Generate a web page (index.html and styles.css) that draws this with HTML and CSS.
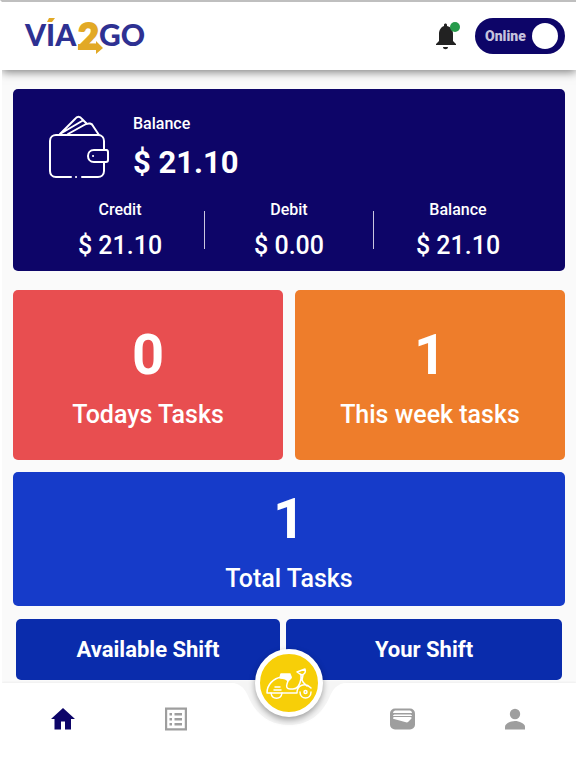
FILE: index.html
```html
<!DOCTYPE html>
<html lang="en">
<head>
    <meta charset="utf-8">
    <meta name="viewport" content="width=device-width, initial-scale=1">
    <title>VÍA2GO</title>
    <link rel="stylesheet" href="styles.css">
</head>
<body>
    <header class="topbar">
        <a href="#" class="logo">
            <svg width="130" height="56" viewBox="0 0 130 56">
                <text class="logo-blue" x="1" y="38">VÍA</text>
                <path fill="#fff" d="M20 7h14v8H20z"/>
                <path class="logo-gold" d="M25 10h6l-3 4h-5z"/>
                <text class="logo-gold logo-two" x="54" y="41">2</text>
                <path class="logo-gold" d="M54 36h18v-3l7 7-7 6v-4H54z"/>
                <text class="logo-blue" x="75" y="38">GO</text>
            </svg>
        </a>
        <div class="topbar-right">
            <button type="button" class="bell" aria-label="Notifications">
                <svg width="28" height="32" viewBox="0 0 28 32">
                    <path fill="#222" d="M1 25v-1l3-3v-7c0-4 2-7 5-8V5c0-2 3-2 3 0v1c4 1 6 4 6 8v7l3 3v1zM8 27h5c0 3-5 3-5 0z"/>
                    <circle cx="20" cy="7" r="5" fill="#269b4b"/>
                </svg>
            </button>
            <label class="switch">
                <input type="checkbox" checked>
                <span>Online</span>
                <i class="knob"></i>
            </label>
        </div>
    </header>

    <main class="content">
        <section class="balance">
            <div class="balance-top">
                <svg class="wallet" width="62" height="66" viewBox="0 0 62 66" fill="none" stroke="#fff" stroke-width="2" stroke-linecap="round" stroke-linejoin="round">
                    <path d="M24 64H9c-4 0-6-3-6-6V28c0-4 3-6 6-6h42c4 0 6 3 6 6v9M57 49v9c0 4-3 6-6 6H35M29 64h.1"/>
                    <path d="M60 37H47c-8 0-8 12 0 12h12c2 0 2-1 2-2V39c0-1 0-2-2-2M46 43h.1"/>
                    <path d="M13 21L28 6c2-3 5-3 7 0l4 4M21 21l18-10c3-1 6-1 7 2l6 9M13 21l22-13"/>
                </svg>
                <div>
                    <p class="label">Balance</p>
                    <p class="amount-big">$ 21.10</p>
                </div>
            </div>
            <div class="balance-stats">
                <div class="stat">
                    <p class="label">Credit</p>
                    <p class="amount">$ 21.10</p>
                </div>
                <span class="divider"></span>
                <div class="stat">
                    <p class="label">Debit</p>
                    <p class="amount">$ 0.00</p>
                </div>
                <span class="divider"></span>
                <div class="stat">
                    <p class="label">Balance</p>
                    <p class="amount">$ 21.10</p>
                </div>
            </div>
        </section>

        <section class="tasks">
            <a href="#" class="task red">
                <strong>0</strong>
                <span>Todays Tasks</span>
            </a>
            <a href="#" class="task orange">
                <strong>1</strong>
                <span>This week tasks</span>
            </a>
            <a href="#" class="task blue">
                <strong>1</strong>
                <span>Total Tasks</span>
            </a>
        </section>

        <section class="shifts">
            <button type="button" class="shift">Available Shift</button>
            <button type="button" class="shift">Your Shift</button>
        </section>
    </main>

    <nav class="bottom">
        <a href="#" class="active" aria-label="Home">
            <svg width="24" height="24" viewBox="0 0 24 24"><path d="M10 22.500v-8h4v8h6V12h4L12 1 0 12h3.500v10.500z"/></svg>
        </a>
        <a href="#" aria-label="Tasks">
            <svg width="24" height="24" viewBox="0 0 24 24"><path fill-rule="evenodd" d="M1 .5h22v23H1zM3.200 2.700v18.600h17.600v-18.600zM5.500 6H8v2.500H5.500zM10.500 6H18v2.500h-7.500zM5.500 11H8v2.500H5.500zM10.500 11H18v2.500h-7.500zM5.500 16H8v2.500H5.500zM10.500 16H18v2.500h-7.500z"/></svg>
        </a>
        <div class="middle">
            <svg class="notch" width="128" height="46" viewBox="0 0 128 46">
                <path d="M0 0c14 0 19 5 23 14 8 19 22 29 41 29s33-10 41-29c4-9 9-14 23-14z"/>
            </svg>
            <button type="button" class="ride" aria-label="Deliveries">
                <svg width="48" height="32" viewBox="0 0 48 32" fill="none" stroke="#fff" stroke-width="1.500" stroke-linecap="round" stroke-linejoin="round">
                    <path d="M2 26c0-8 6-15 15-16 5 0 7 3 5 7-1 3 0 5 3 5h3c5 0 7-5 8-10V8M2 26h30c0-8 8-11 14-5M38 8l-1 5c1 3 3 4 5 6"/>
                    <path fill="#fff" d="M16 7h9c0 2 2 3 1 4l-3 3c-1-2-4-3-8-3z"/>
                    <path d="M32 5l8-3c1 3 0 5-3 6l-2-1z"/>
                    <path d="M6 26c1 7 10 7 11 0M10 20h5M9 23h7"/>
                    <path d="M35 25c0 8 11 8 11 0"/>
                    <circle cx="40.500" cy="25" r="1.500"/>
                </svg>
            </button>
        </div>
        <a href="#" aria-label="Wallet">
            <svg width="26" height="24" viewBox="0 0 26 24">
                <rect x="1" y="1.500" width="25" height="21" rx="5"/>
                <path fill="#fff" d="M4 6c0-2 2-2.500 3-2.500h13c1 0 3 .5 3 2.500zM4 9c0-1 1-1.500 2-1.500h15c1 0 2 .5 2 1.500zM4 11c0-1 1-1 2-1h15c2 0 2 1 1 2l-3 3c-1 1-2 0-3 0L5 12q-1 0-1-1z"/>
            </svg>
        </a>
        <a href="#" aria-label="Profile">
            <svg width="24" height="24" viewBox="0 0 24 24"><circle cx="12" cy="7" r="5.200"/><path d="M2 22.500v-3c0-3 6-5.500 10-5.500s10 2.500 10 5.500v3z"/></svg>
        </a>
    </nav>
</body>
</html>
```
FILE: styles.css
```css
* {box-sizing: border-box;}

body {
    margin: 0;
    min-height: 100vh;
    display: flex;
    flex-direction: column;
    border-top: 2px solid #bfbfbf;
    border-left: 2px solid white;
    background-color: #fafafa;
    font-family: Roboto, "Liberation Sans", sans-serif;
    color: white;
}

p {margin: 0;}
a {color: inherit; text-decoration: none;}
button {
    border: none;
    padding: 0;
    font: inherit;
    color: inherit;
    cursor: pointer;
}
svg {display: block;}

.topbar {
    display: flex;
    justify-content: space-between;
    align-items: center;
    height: 68px;
    padding: 0 11px 0 22px;
    background-color: white;
    box-shadow: 0 2px 9px rgba(0, 0, 0, 0.5);
}

.logo-blue {
    fill: #2e3192;
    font: 900 30px Lato, sans-serif;
}
.logo-gold {fill: #e2a925;}
.logo-two {
    font: 900 36px Lato, sans-serif;
    stroke: #e2a925;
    stroke-width: 2px;
}

.topbar-right {
    display: flex;
    align-items: center;
    gap: 12px;
}
.bell {background: none;}

.switch {
    display: flex;
    align-items: center;
    justify-content: space-between;
    width: 90px;
    height: 36px;
    padding: 0 7px 0 10px;
    border-radius: 18px;
    background-color: #0d0568;
    color: #c6c2dd;
    font-size: 14px;
    font-weight: 900;
    cursor: pointer;
}
.switch input {
    position: absolute;
    opacity: 0;
}
.knob {
    width: 26px;
    height: 26px;
    border-radius: 50%;
    background-color: white;
}

.content {
    flex: 1;
    padding: 19px 11px 3px;
}

.balance {
    padding: 24px 23px 10px;
    border-radius: 5px;
    background-color: #0d0568;
}
.balance-top {
    display: flex;
    gap: 24px;
    padding-left: 11px;
}
.label {
    font-size: 16px;
    font-weight: 500;
    line-height: 22px;
}
.amount-big {
    margin-top: 8px;
    font-size: 31px;
    font-weight: 700;
    line-height: 40px;
}
.balance-stats {
    display: flex;
    align-items: center;
    margin-top: 16px;
    text-align: center;
}
.stat {flex: 1;}
.amount {
    margin-top: 10px;
    font-size: 25px;
    font-weight: 500;
    line-height: 30px;
}
.divider {
    width: 1px;
    height: 38px;
    background-color: #c9c6df;
}

.tasks {
    display: grid;
    grid-template-columns: 1fr 1fr;
    gap: 12px;
    margin-top: 19px;
}
.task {
    display: flex;
    flex-direction: column;
    align-items: center;
    padding: 32px 0 28px;
    border-radius: 5px;
}
.task strong {
    font-size: 56px;
    line-height: 66px;
}
.task span {
    margin-top: 10px;
    font-size: 25px;
    font-weight: 500;
    line-height: 34px;
}
.red {background-color: #e84e50;}
.orange {background-color: #ee7d2b;}
.blue {
    grid-column: span 2;
    padding: 14px 0 10px;
    background-color: #163bc9;
}

.shifts {
    display: flex;
    gap: 6px;
    margin-top: 13px;
    padding: 0 3px;
}
.shift {
    flex: 23;
    height: 61px;
    border-radius: 5px;
    background-color: #0a2cac;
    font-size: 22px;
    font-weight: 700;
}
.shift:first-child {flex: 22;}

.bottom {
    display: grid;
    grid-template-columns: repeat(5, 1fr);
    justify-items: center;
    height: 85px;
    padding: 0 5px;
    background-color: white;
    box-shadow: 0 -1px 2px rgba(0, 0, 0, 0.05);
    color: #9e9e9e;
}
.bottom a {padding-top: 24px;}
.bottom .active {color: #0d0568;}
.bottom a svg {fill: currentColor;}

.middle {
    position: relative;
    display: flex;
    justify-content: center;
}
.notch {
    position: absolute;
    top: -1px;
    fill: #f5f5f5;
}
.ride {
    position: relative;
    display: flex;
    align-items: center;
    justify-content: center;
    width: 68px;
    height: 68px;
    margin-top: -34px;
    border: 5px solid white;
    border-radius: 50%;
    background-color: #f7cf08;
    box-shadow: 0 3px 6px rgba(0, 0, 0, 0.35);
}
```
